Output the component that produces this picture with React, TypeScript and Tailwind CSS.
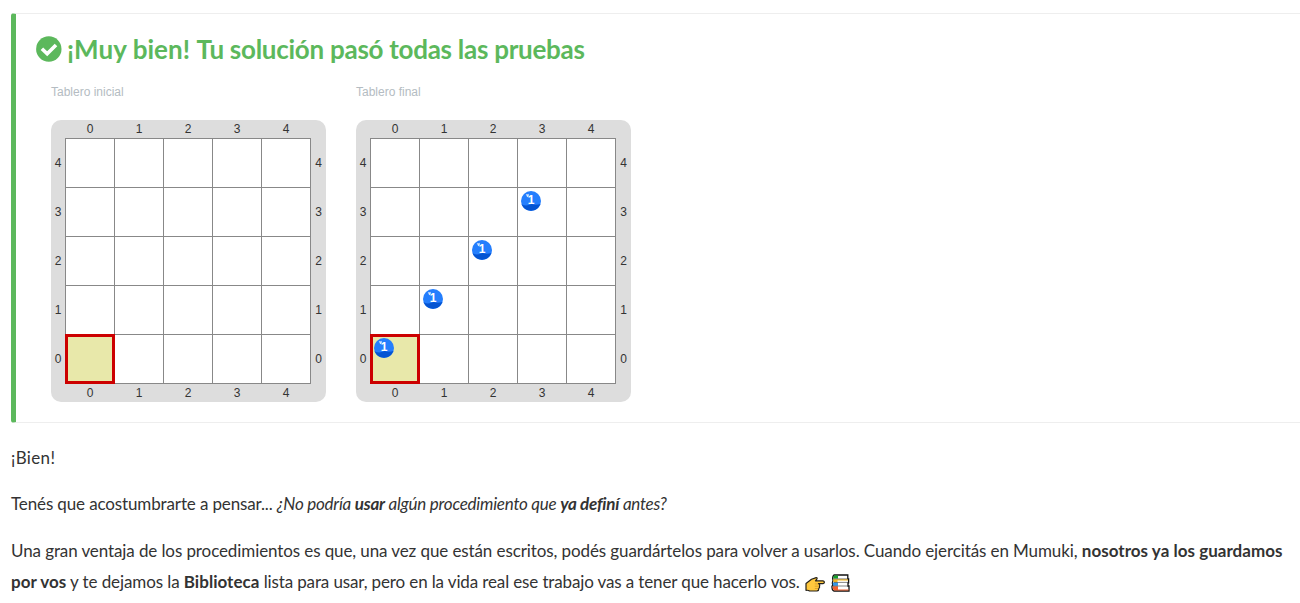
import React from 'react';

const columns = [0, 1, 2, 3, 4];
const rows = [4, 3, 2, 1, 0];

function Ball() {
  return (
    <svg viewBox="0 0 20 20" className="block h-5 w-5" aria-hidden="true">
      <circle cx="10" cy="10" r="10" fill="#247efd" />
      <path d="M.6 13.2 C4 15.2 8 14.4 10.5 12.8 C13 14.2 17 13.8 19.4 13 A10 10 0 0 1 .6 13.2Z" fill="#0454d2" />
      <path d="M4.8 3 L6.2 3.6 L7.6 2.8 L7.8 5.2 L6.2 6.2 L5.6 4.8Z" fill="#d7e8ff" />
      <text x="10.2" y="13.4" textAnchor="middle" fill="#fff" fontSize="12" fontWeight="700" fontFamily="Liberation Sans, sans-serif">1</text>
    </svg>
  );
}

function Board({ title, balls }: { title: string; balls: boolean }) {
  const labels = (edge: string, cls: string) => (
    <>
      <span />
      {columns.map((c) => (
        <span key={edge + c} className={cls}>{c}</span>
      ))}
      <span />
    </>
  );
  return (
    <div className="w-[275px] font-['Liberation_Sans',Arial,sans-serif]">
      <div className="h-[36px] pt-[1px] text-[12px] leading-[15px] text-[#b4bcc2]">{title}</div>
      <div className="grid grid-cols-[14px_repeat(5,49px)_16px] grid-rows-[18px_repeat(5,49px)_19px] rounded-[10px] bg-[#dddddd] text-[12px] text-[#333333]">
        {labels('top', 'pl-px text-center leading-[18px]')}
        {rows.map((r) => (
          <React.Fragment key={r}>
            <span className="text-center leading-[50px]">{r}</span>
            {columns.map((c) => {
              const head = r === 0 && c === 0;
              return (
                <div
                  key={c}
                  className={
                    head
                      ? 'relative z-10 h-[50px] w-[50px] border-3 border-[#cc0000] bg-[#e8e8aa] pl-px pt-px'
                      : 'h-[50px] w-[50px] border border-[#888888] bg-white pl-[3px] pt-[3px]'
                  }
                >
                  {balls && r === c && r < 4 && <Ball />}
                </div>
              );
            })}
            <span className="pl-px text-center leading-[50px]">{r}</span>
          </React.Fragment>
        ))}
        {labels('bottom', 'pl-px pt-px text-center leading-[18px]')}
      </div>
    </div>
  );
}

function PointingHand() {
  return (
    <svg viewBox="0 0 20 18" className="ml-px inline-block h-[18px] w-5 align-[-6px]" aria-hidden="true">
      <path d="M1 7.5 L6.5 3.2 L11.2 1.6 Q12.5 1.6 12 2.8 L10.5 4.8 H18 Q19.4 5.2 19.4 6.2 Q19.4 7.4 18 7.7 H13.5 Q15.3 8.4 14.5 10 Q15 11.4 13.8 12.5 Q14 14.5 12 15 H4.5 Q3.5 14 1 14.3Z" fill="#ffc83d" stroke="#24211b" strokeWidth="1.2" strokeLinejoin="round" />
      <path d="M9.8 7.9 H13 M9.8 10.2 H13.8 M9.8 12.5 H13.2" stroke="#b67b16" strokeWidth=".5" />
    </svg>
  );
}

function Books() {
  return (
    <svg viewBox="0 0 19 18" className="ml-[6px] inline-block h-[18px] w-[19px] align-[-4px]" aria-hidden="true">
      <path d="M3 1 H16.8 V4.8 H17.6 V8.8 H17 V12 H18 V17 H3 Q.8 16.5 1 12.3 L1.8 11 Q.8 9 2 6.4 Q1 2.5 3 1Z" fill="#fff" stroke="#111" strokeWidth="1.3" />
      <path d="M3 1.4 H7 V4.6 H2.4 Q1.9 2.7 3 1.4Z" fill="#16a32c" />
      <path d="M2.2 5.2 H17 V6.6 H6.5 V8.2 H2.5Z" fill="#f8b91d" />
      <path d="M1.7 8.6 H7 V11.8 H2Z" fill="#3598e8" />
      <path d="M1.7 12.3 H7 V15.6 H17.5 V16.6 H3 Q1.4 15.5 1.7 12.3Z" fill="#f4602e" />
      <path d="M3 4.9 H17 M3 8.4 H17.5 M2 12 H18" stroke="#333" strokeWidth=".6" />
    </svg>
  );
}

export default function App() {
  return (
    <main className="h-[603px] w-[1300px] overflow-hidden bg-white pl-[11px] pt-[13px] font-['Lato',sans-serif] text-[#333333]">
      <section className="h-[410px] rounded-l-[3px] border-y border-l-5 border-y-[#eeeeee] border-l-[#5cb85c] pl-5">
        <h1 className="flex h-[70px] items-center whitespace-pre text-[26px] font-bold leading-[30px] tracking-[-0.27px] text-[#5cb85c]">
          <svg viewBox="0 0 26 26" className="mr-[5px] h-[26px] w-[26px] shrink-0" aria-hidden="true">
            <circle cx="12.8" cy="13" r="12.7" fill="#5cb85c" />
            <path d="M5.9 12.7 L11.2 17.8 L20 9" fill="none" stroke="#fff" strokeWidth="3.6" />
          </svg>
          <span><span className="tracking-[0.05px]">¡Muy bien! </span>Tu solución pasó todas las pruebas</span>
        </h1>
        <div className="flex gap-[30px] pl-[15px]">
          <Board title="Tablero inicial" balls={false} />
          <Board title="Tablero final" balls />
        </div>
      </section>
      <article className="whitespace-nowrap pt-[19px] text-[17px] leading-[31px] tracking-[-0.1px]">
        <p className="mb-[15px] tracking-[0.35px]">¡Bien!</p>
        <p className="mb-4 tracking-[-0.13px]">
          Tenés que acostumbrarte a pensar... <em className="tracking-[-0.24px]">¿No podría <strong>usar</strong> algún procedimiento que <strong>ya definí</strong> antes?</em>
        </p>
        <p>
          Una gran ventaja de los procedimientos es que, una vez que están escritos, podés guardártelos para volver a usarlos. Cuando ejercitás en Mumuki, <strong className="tracking-[0.03px]">nosotros ya los guardamos</strong>
          <br />
          <strong className="tracking-[0.03px]">por vos</strong> y te dejamos la <strong className="tracking-[0.03px]">Biblioteca</strong> <span className="tracking-[-0.13px]">lista para usar, pero en la vida real ese trabajo vas a tener que hacerlo vos. </span><PointingHand /><Books />
        </p>
      </article>
    </main>
  );
}
